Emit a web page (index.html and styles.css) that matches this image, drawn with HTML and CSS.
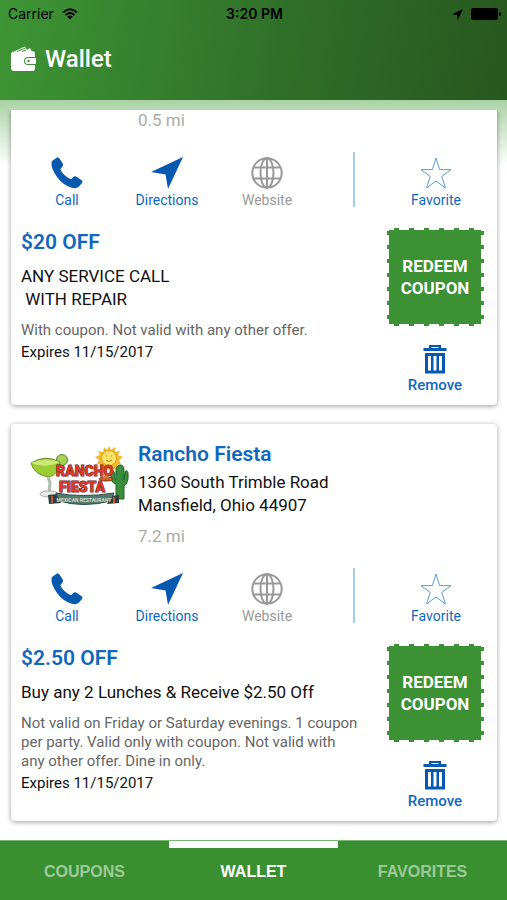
FILE: index.html
```html
<!DOCTYPE html>
<html lang="en">
<head>
  <meta charset="utf-8">
  <meta name="viewport" content="width=device-width, initial-scale=1">
  <title>Wallet</title>
  <link rel="stylesheet" href="styles.css">
</head>
<body>
  <!-- shared icons -->
  <svg class="sprite" aria-hidden="true">
    <symbol id="phone" viewBox="0 0 32 32">
      <path d="M1 4 L6 .5 Q7.500 0 8.500 1.500 L12 7 Q12.500 8.500 11 10 L9.500 12 Q10 15 14 18.500 Q18 22 20.500 22 L22.500 19.800 Q23.500 19 25 19.500 L31 23.500 Q32 24.500 31 26 L27.500 30 Q25 32 20 30.500 Q12 28 6 20 Q0 11.500 .5 6 Q.5 4.800 1 4Z"/>
    </symbol>
    <symbol id="arrow" viewBox="0 0 32 32">
      <path d="M32 0 L17 32 L14.500 17.500 L0 15Z"/>
    </symbol>
    <symbol id="globe" viewBox="0 0 32 32">
      <g fill="none" stroke="currentColor" stroke-width="2">
        <circle cx="16" cy="16" r="14.700"/>
        <ellipse cx="16" cy="16" rx="6.500" ry="14.700"/>
        <path d="M16 1V31M2.500 10.500H29.500M2.500 21.500H29.500"/>
      </g>
    </symbol>
    <symbol id="star" viewBox="0 0 32 32">
      <path d="M16 1 L19.600 12.600 H31 L21.800 19.500 L25.500 31 L16 24 L6.500 31 L10.200 19.500 L1 12.600 H12.400Z" fill="none" stroke="#5b9bdc" stroke-width="1"/>
    </symbol>
    <symbol id="trash" viewBox="0 0 24 30">
      <path fill-rule="evenodd" d="M6 1H18V4H23.500V7H.5V4H6ZM8.500 3V4H15.500V3ZM2 9H22V29.500H2ZM5 12V26.500H8V12ZM10.500 12V26.500H13.500V12ZM16 12V26.500H19V12Z"/>
    </symbol>
  </svg>

  <header class="header">
    <div class="status">
      <span class="carrier">Carrier
        <svg width="16" height="12" viewBox="0 0 16 12" aria-hidden="true">
          <path d="M1 4.500Q8-2 15 4.500M3.500 7Q8 3 12.500 7" fill="none" stroke="#000" stroke-width="1.800"/>
          <path d="M5.300 8.700Q8 6.500 10.700 8.700L8 11.500Z"/>
        </svg>
      </span>
      <span class="clock">3:20 PM</span>
      <span class="power">
        <svg width="11" height="11" viewBox="0 0 32 32" aria-hidden="true"><use href="#arrow"/></svg>
        <svg width="30" height="12" viewBox="0 0 30 12" aria-hidden="true">
          <rect width="27" height="12" rx="2"/><path d="M28 4Q30 4 30 6Q30 8 28 8Z"/>
        </svg>
      </span>
    </div>
    <div class="title">
      <svg width="26" height="26" viewBox="0 0 26 26" aria-hidden="true">
        <path fill="#fff" d="M3 5.500L14 .5L16 4L19 2L20.500 5H22Q24 5.500 24 8V11H17Q13 11 13 15Q13 19 17 19H24V23Q24 25 22 25H3Q0 25 0 22V8Q0 6 3 5.500Z"/>
        <path d="M6 5.500L14.500 2M11 5.500L15 4" stroke="#3b8c33"/>
        <path fill="#fff" d="M17 12H25V18H17Q14 18 14 15Q14 12 17 12Z"/>
        <circle cx="17.500" cy="15" r="1.200" fill="#3b8c33"/>
      </svg>
      <h1>Wallet</h1>
    </div>
  </header>

  <main class="list">
    <article class="card card-cut">
      <p class="distance">0.5 mi</p>
      <nav class="actions">
        <a href="#call"><svg class="icon"><use href="#phone"/></svg>Call</a>
        <a href="#directions"><svg class="icon"><use href="#arrow"/></svg>Directions</a>
        <a href="#website" class="disabled"><svg class="icon"><use href="#globe"/></svg>Website</a>
        <span class="divider"></span>
        <a href="#favorite"><svg class="icon"><use href="#star"/></svg>Favorite</a>
      </nav>
      <div class="coupon">
        <div class="offer">
          <h3>$20 OFF</h3>
          <p class="deal">ANY SERVICE CALL<br>&nbsp;WITH REPAIR</p>
          <p class="terms">With coupon. Not valid with any other offer.</p>
          <p class="expires">Expires 11/15/2017</p>
        </div>
        <div class="side">
          <button class="redeem" type="button">REDEEM COUPON</button>
          <button class="remove" type="button"><svg class="bin"><use href="#trash"/></svg>Remove</button>
        </div>
      </div>
    </article>

    <article class="card">
      <div class="store">
        <svg class="logo" viewBox="0 0 104 62" role="img" aria-label="Rancho Fiesta">
          <!-- sun -->
          <path d="M82 0L84 4L88 1L88 6L93 5L91 9L96 11L92 14L94 18L90 19L90 23L74 23L74 19L70 18L72 14L68 11L73 9L71 5L76 6L77 1L80 4Z" fill="#f1b72e"/>
          <circle cx="82" cy="12" r="7.500" fill="#fbe36a" stroke="#e9a21f"/>
          <path d="M79 10h1M84 10h1M79 14Q82 17 85 14" stroke="#b47a1c" fill="none"/>
          <!-- margarita -->
          <circle cx="35" cy="14" r="5.500" fill="#a5cf55" stroke="#528a2c"/>
          <path d="M4 17Q18 8 33 16Q32 28 22 31Q7 29 4 17Z" fill="#9bcc32" stroke="#68942f"/>
          <path d="M4 17Q18 11 33 16Q18 23 4 17Z" fill="#cce878"/>
          <path d="M21 31L23 37L22 47" fill="none" stroke="#aebbae" stroke-width="3"/>
          <ellipse cx="22" cy="48" rx="9" ry="3" fill="#e7ece7" stroke="#a5ada5"/>
          <!-- cactus -->
          <path d="M89 53V38Q83 37 84 26Q86 23 88 27V33H89V23Q90 19 93 19Q97 19 97 24V34L98 26Q100 23 101 27Q102 37 97 40V53Z" fill="#3a8d3b" stroke="#23652c"/>
          <!-- ribbon -->
          <path d="M21 49L30 48L34 57L22 58ZM84 50L92 49L92 57L80 58Z" fill="#303e3f"/>
          <path d="M25 50V57M87 51V57" stroke="#bd5834" stroke-width="2"/>
          <path d="M29 47Q55 52 87 47L84 55Q56 62 32 55Z" fill="#527c70" stroke="#344b45"/>
          <g class="logo-name">
            <text x="29" y="30">RANCHO</text>
            <text x="32" y="46">FIESTA</text>
          </g>
          <ellipse cx="79" cy="33" rx="7" ry="2" fill="#cf622b" stroke="#813a1b"/>
          <path d="M75 32Q79 26 82 32Z" fill="#dc7834"/>
          <text x="57" y="56" class="logo-tag">MEXICAN RESTAURANT</text>
        </svg>
        <div>
          <h2>Rancho Fiesta</h2>
          <p class="address">1360 South Trimble Road<br>Mansfield, Ohio 44907</p>
          <p class="distance">7.2 mi</p>
        </div>
      </div>
      <nav class="actions">
        <a href="#call"><svg class="icon"><use href="#phone"/></svg>Call</a>
        <a href="#directions"><svg class="icon"><use href="#arrow"/></svg>Directions</a>
        <a href="#website" class="disabled"><svg class="icon"><use href="#globe"/></svg>Website</a>
        <span class="divider"></span>
        <a href="#favorite"><svg class="icon"><use href="#star"/></svg>Favorite</a>
      </nav>
      <div class="coupon">
        <div class="offer">
          <h3>$2.50 OFF</h3>
          <p class="deal">Buy any 2 Lunches &amp; Receive $2.50 Off</p>
          <p class="terms">Not valid on Friday or Saturday evenings. 1 coupon per party. Valid only with coupon. Not valid with any other offer. Dine in only.</p>
          <p class="expires">Expires 11/15/2017</p>
        </div>
        <div class="side">
          <button class="redeem" type="button">REDEEM COUPON</button>
          <button class="remove" type="button"><svg class="bin"><use href="#trash"/></svg>Remove</button>
        </div>
      </div>
    </article>
  </main>

  <nav class="tabs">
    <a href="#coupons">COUPONS</a>
    <a href="#wallet" class="active">WALLET</a>
    <a href="#favorites">FAVORITES</a>
  </nav>
</body>
</html>
```

FILE: styles.css
```css
* { box-sizing: border-box; }
body {
  margin: 0; min-height: 100vh;
  display: flex; flex-direction: column;
  font-family: Roboto, sans-serif; background: #fff; color: #111;
}
h1, h2, h3, p { margin: 0; }
a { text-decoration: none; }
svg { display: block; }
.sprite { display: none; }

/* header */
.header {
  height: 100px;
  background: linear-gradient(100deg, #3e9535, #2f7028 55%, #28561f);
}
.status {
  display: grid; grid-template-columns: 1fr auto 1fr; align-items: center;
  height: 28px; padding: 0 6px 0 8px;
  font: 14px/20px Inter, sans-serif; color: #000;
}
.carrier, .power { display: flex; align-items: center; gap: 8px; }
.power { justify-content: flex-end; }
.clock { font-weight: 600; }
.title { display: flex; align-items: center; gap: 8px; padding: 2px 11px; color: #fff; }
.title h1 { font-size: 24px; line-height: 58px; font-weight: 500; }

/* coupon list */
.list {
  flex: 1; padding: 10px 10px 19px 11px;
  background: linear-gradient(#a9d2a5, #fff 66px);
}
.card {
  margin-bottom: 19px; padding-top: 16px;
  background: #fff; border-radius: 4px;
  box-shadow: 0 1px 5px rgba(0,0,0,.4);
}
.card:last-child { margin-bottom: 0; }
.card-cut {
  padding-top: 0; border-radius: 0 0 4px 4px;
  clip-path: inset(0 -10px -10px -10px);
}
.card-cut .distance { padding-left: 127px; margin: 0; }
.store { display: grid; grid-template-columns: 104px 1fr; gap: 7px; padding-left: 16px; }
.logo { width: 104px; height: 62px; margin-top: 6px; }
.logo-name { font: 900 14px Roboto, sans-serif; fill: #d83a27; stroke: #6d2019; stroke-width: 1px; paint-order: stroke; }
.logo-tag { font: 700 5px Roboto, sans-serif; fill: #cfdccb; text-anchor: middle; }
h2, h3 { font-size: 21px; line-height: 28px; font-weight: 600; color: #1067bf; }
.address { margin-top: 3px; font-size: 17px; line-height: 23px; }
.distance { margin-top: 9px; font-size: 17px; line-height: 20px; color: #aaa; }

.actions {
  display: grid; grid-template-columns: 100fr 100fr 100fr 74fr 90fr;
  margin-top: 22px; padding: 0 16px 0 6px;
}
.actions a {
  display: flex; flex-direction: column; align-items: center; gap: 2px;
  padding-top: 5px; font-size: 14px; line-height: 18px; color: #1067bf;
}
.actions .disabled { color: #999; }
.icon { width: 32px; height: 32px; fill: #0759b0; }
.divider { width: 2px; height: 55px; justify-self: center; background: #a5cdef; }

.coupon {
  display: grid; grid-template-columns: 1fr 104px; gap: 24px;
  padding: 19px 10px 10px;
}
.deal { margin-top: 9px; font-size: 17px; line-height: 23px; }
.terms { margin-top: 10px; font-size: 15px; line-height: 19px; color: #666; }
.expires { margin-top: 2px; font-size: 15px; line-height: 20px; }
.side { display: flex; flex-direction: column; align-items: center; gap: 18px; }
button { font-family: inherit; border: 0; cursor: pointer; }
.redeem {
  width: 97px; height: 98px; padding: 2px 8px;
  font-size: 17px; line-height: 22px; font-weight: 700; color: #fff;
  border-radius: 3px;
  background:
    linear-gradient(#3b9133, #3b9133) center / calc(100% - 5px) calc(100% - 4px) no-repeat,
    repeating-linear-gradient(90deg, transparent 0 7px, #3b9133 7px 12px, transparent 12px 15px),
    repeating-linear-gradient(transparent 0 3px, #3b9133 3px 7px, transparent 7px 14px);
}
.remove {
  display: flex; flex-direction: column; align-items: center; gap: 1px;
  padding: 0; background: none;
  font-size: 15px; line-height: 20px; font-weight: 500; color: #1067bf;
}
.bin { width: 24px; height: 30px; fill: #0759b0; }

/* bottom tabs */
.tabs { display: flex; height: 60px; background: #3a8f30; border-top: 1px solid #79b573; }
.tabs a {
  flex: 1; border-top: 7px solid transparent; padding-bottom: 4px;
  display: flex; align-items: center; justify-content: center;
  font: bold 16px "Liberation Sans", Arial, sans-serif; color: #9dcb98;
}
.tabs .active { color: #fff; border-top-color: #fff; }
```
